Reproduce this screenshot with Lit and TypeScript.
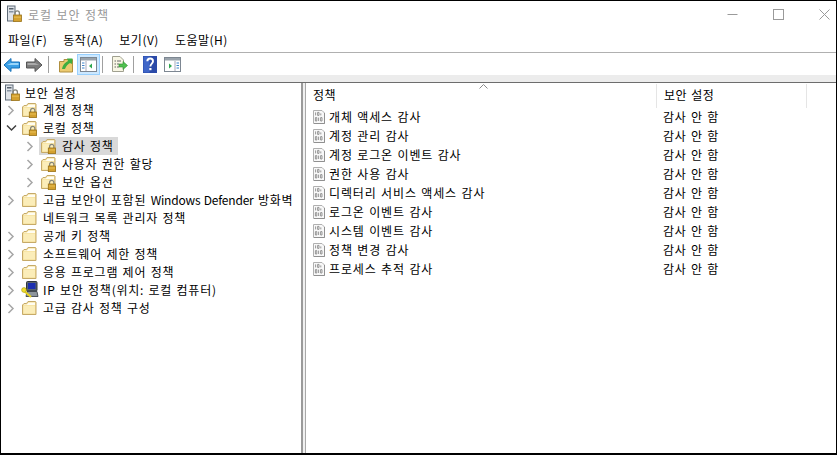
import { LitElement, html, css, svg } from "lit";
import { customElement } from "lit/decorators.js";

const lockParts = svg`<path d="M9.6 10V8.4A2.1 2.1 0 0 1 13.8 8.4V10" fill="none" stroke="#85857a" stroke-width="1.2"/>
  <rect x="8.3" y="10" width="7.2" height="5.6" fill="#d4a12f" stroke="#9a7218" stroke-width=".8"/><path d="M9 12H15" stroke="#eec860" stroke-width=".8"/>`;

const folder = (lock: boolean) => svg`<svg class="ic" width="18" height="16" viewBox="0 0 18 16">
  <path d="M1.5 5L3 3.5H5.5L7 1.5H14.5L15 2V14.5H1.5Z" fill="#f3dc95" stroke="#c6aa68"/>
  <path d="M7.5 2.5H14V5H3V4.5H6Z" fill="#fffdf2"/>
  <rect x="2.5" y="5.5" width="11.5" height="8" fill="#fbedb9"/>
  ${lock ? lockParts : ""}
</svg>`;

const server = svg`<svg class="ic" width="18" height="18" viewBox="0 0 18 18">
  <rect x="2.5" y="1" width="7.5" height="15" fill="#dfe3e8" stroke="#5f6b78"/>
  <rect x="4" y="3" width="4.5" height="1.5" fill="#55606c"/><rect x="4" y="6" width="4.5" height="1.5" fill="#8794a2"/>
  <path d="M10 9.5V8A2.2 2.2 0 0 1 14.4 8V10" fill="none" stroke="#85857a" stroke-width="1.3"/>
  <rect x="8.5" y="10" width="8" height="6.5" fill="#d4a12f" stroke="#9a7218" stroke-width=".8"/>
  <path d="M9 12.2H16" stroke="#eec860" stroke-width=".8"/>
</svg>`;

const ipsec = svg`<svg class="ic" width="18" height="18" viewBox="0 0 18 18">
  <rect x="5.5" y="0.5" width="10.5" height="9.5" rx="1" fill="#59646e" stroke="#30363d"/>
  <rect x="7" y="2" width="7.5" height="6" fill="#1c2fb0"/>
  <path d="M6 10.5H16L17 15.5H5Z" fill="#8d959c" stroke="#30363d" stroke-width=".8"/>
  <path d="M2 9L10 16" stroke="#e8d21e" stroke-width="2"/><circle cx="3" cy="9" r="2.4" fill="#f2e02a" stroke="#a69514" stroke-width=".6"/>
</svg>`;

const policy = svg`<svg class="ic" width="14" height="15" viewBox="0 0 14 15">
  <path d="M1.5 1.5H10L12.5 4V14.5H1.5Z" fill="#f8f8f8" stroke="#b0b0b0"/>
  <path d="M12.5 4V14.5H2" fill="none" stroke="#909090"/>
  <path d="M3.6 3.4v3M5.6 3.4h1.4v3H5.6zM8.8 4.4v2M3.4 8.6h1.4v3.4H3.4zM6.6 8.6v3.4M8.6 8.6h1.4v3.4H8.6z" fill="none" stroke="#8c8c8c" stroke-width=".9"/>
</svg>`;

const chevR = svg`<svg width="8" height="11" viewBox="0 0 8 11"><path d="M1.5 1L6 5.5L1.5 10" fill="none" stroke="#a6a6a6" stroke-width="1.5"/></svg>`;
const chevD = svg`<svg width="11" height="8" viewBox="0 0 11 8"><path d="M1 1.5L5.5 6L10 1.5" fill="none" stroke="#404040" stroke-width="1.5"/></svg>`;

const tree: [number, "r" | "d" | "", string, unknown, boolean?][] = [
  [0, "r", "lock", "계정 정책"],
  [0, "d", "lock", "로컬 정책"],
  [1, "r", "lock", "감사 정책", true],
  [1, "r", "lock", "사용자 권한 할당"],
  [1, "r", "lock", "보안 옵션"],
  [0, "r", "folder", html`고급 보안이 포함된 <span class="latin">Windows Defender</span> 방화벽`],
  [0, "", "folder", "네트워크 목록 관리자 정책"],
  [0, "r", "folder", "공개 키 정책"],
  [0, "r", "folder", "소프트웨어 제한 정책"],
  [0, "r", "folder", "응용 프로그램 제어 정책"],
  [0, "r", "ip", "IP 보안 정책(위치: 로컬 컴퓨터)"],
  [0, "r", "folder", "고급 감사 정책 구성"],
];
const rows = ["개체 액세스 감사", "계정 관리 감사", "계정 로그온 이벤트 감사", "권한 사용 감사", "디렉터리 서비스 액세스 감사", "로그온 이벤트 감사", "시스템 이벤트 감사", "정책 변경 감사", "프로세스 추적 감사"];

@customElement("app-root")
export class AppRoot extends LitElement {
  static styles = css`
    :host { display: block; width: 837px; height: 455px; box-sizing: border-box; border: 1px solid #000; border-bottom-width: 2px; background: #fff; overflow: hidden;
      font: 12px "Noto Sans CJK KR", "Liberation Sans", sans-serif; color: #000; }
    .win { display: flex; flex-direction: column; height: 100%; }
    .title { height: 26px; display: flex; align-items: center; padding-left: 4px; color: #999; letter-spacing: .9px; word-spacing: 1px; flex: none; }
    .title span { margin-left: 5px; }
    .caps { margin-left: auto; display: flex; align-items: center; }
    .cap { width: 46px; height: 26px; display: flex; align-items: center; justify-content: center; }
    .cap:last-child { width: 24px; margin-left: 11px; }
    .menu { height: 25px; display: flex; align-items: center; padding-left: 7px; gap: 16px; flex: none; border-bottom: 1px solid #b0b0b0; letter-spacing: .5px; }
    .tools { height: 22px; display: flex; align-items: flex-end; flex: none; box-sizing: border-box; }
    .tb { width: 23px; height: 21px; display: flex; align-items: center; justify-content: center; box-sizing: border-box; flex: none; }
    .tb.first { width: 21px; }
    .tb.on { background: #cce8ff; border: 1px solid #99d1ff; }
    .sep { width: 1px; height: 17px; background: #a0a0a0; flex: none; align-self: center; margin-top: 1px; }
    .s1 { margin: 1px 5px 0 3px; }
    .s2 { margin: 1px 4px 0 2px; }
    .s3 { margin: 1px 4px 0 3px; }
    .band { height: 7px; background: #ececec; border-bottom: 1px solid #6d6d6d; flex: none; box-sizing: content-box; }
    .panes { flex: 1; display: flex; min-height: 0; }
    .left { width: 300px; flex: none; padding-top: 1px; box-sizing: border-box; }
    .split { width: 5px; flex: none; box-sizing: border-box; background: #f0f0f0; border-left: 2px solid #9a9a9a; border-right: 1px solid #a8a8a8; }
    .right { flex: 1; display: flex; flex-direction: column; min-width: 0; }
    .node { height: 18px; display: flex; align-items: center; white-space: nowrap; }
    .arrow { width: 14px; display: flex; justify-content: center; align-items: center; flex: none; margin-left: 3px; }
    .lv1 { padding-left: 19px; }
    .node .ic { flex: none; margin-left: 3px; margin-right: 3px; }
    .node.root { padding-left: 2px; height: 17px; }
    .node.root .ic { margin: 0 3px 0 0; }
    .lbl { padding: 0 4px 0 1px; height: 18px; line-height: 18px; word-spacing: 1px; letter-spacing: .75px; }
    .latin { letter-spacing: -.2px; }
    .sel { background: #d9d9d9; display: flex; align-items: center; height: 18px; margin-left: 2px; }
    .node .sel .ic { margin-left: 1px; }
    .head { height: 24px; display: flex; position: relative; flex: none; }
    .hc { padding: 2px 7px 0; height: 24px; box-sizing: border-box; border-right: 1px solid #e5e5e5; letter-spacing: .5px; word-spacing: 1px; margin-top: 1px; }
    .hc.a { width: 351px; }
    .hc.b { width: 150px; }
    .sort { position: absolute; left: 173px; top: 1px; }
    .item { height: 19px; display: flex; align-items: center; white-space: nowrap; letter-spacing: .85px; word-spacing: 1px; }
    .name { width: 350px; display: flex; align-items: center; box-sizing: border-box; padding-left: 6px; flex: none; }
    .name .ic { margin-right: 3px; }
    .val { padding-left: 7px; letter-spacing: .75px; }
    .list { padding-top: 0; }
  `;
  render() {
    return html`<div class="win">
      <div class="title">
        ${server}<span>로컬 보안 정책</span>
        <div class="caps">
          <div class="cap"><svg width="11" height="11" viewBox="0 0 11 11"><path d="M.5 5.5H10.5" stroke="#9a9a9a"/></svg></div>
          <div class="cap"><svg width="11" height="11" viewBox="0 0 11 11"><rect x=".5" y=".5" width="10" height="10" fill="none" stroke="#9a9a9a"/></svg></div>
          <div class="cap"><svg width="11" height="11" viewBox="0 0 11 11"><path d="M.5 .5L10.5 10.5M10.5 .5L.5 10.5" stroke="#9a9a9a"/></svg></div>
        </div>
      </div>
      <div class="menu"><span>파일(F)</span><span>동작(A)</span><span>보기(V)</span><span>도움말(H)</span></div>
      <div class="tools">
        <div class="tb first"><svg width="18" height="16" viewBox="0 0 18 16"><path d="M1 8L8 1.5V5H16.5V11H8V14.5Z" fill="#3a9fe6" stroke="#1570b8"/><path d="M8 6H15.5V8H4Z" fill="#9ad6fa"/></svg></div>
        <div class="tb"><svg width="18" height="16" viewBox="0 0 18 16"><path d="M17 8L10 1.5V5H1.5V11H10V14.5Z" fill="#7c7c7c" stroke="#555"/><path d="M10 6H2.5V8H14Z" fill="#aaa"/></svg></div>
        <div class="sep s1"></div>
        <div class="tb"><svg width="16" height="17" viewBox="0 0 16 17"><path d="M1.5 5.5H6V3.5H14.5V16H1.5Z" fill="#ecca70" stroke="#b08f3e"/><path d="M4 13C5 8 8 6 10 5L9 2.5L14.5 2.5L14 8L12 7C10 8 8 10 7 13Z" fill="#3fae3f"/></svg></div>
        <div class="tb on"><svg width="17" height="15" viewBox="0 0 17 15"><rect x=".5" y=".5" width="16" height="14" fill="#fff" stroke="#7d8792"/><rect x="1" y="1" width="15" height="2.5" fill="#9aa3ac"/><path d="M6 4V14" stroke="#aab"/><path d="M2 6h2.5M2 8.5h2.5M2 11h2.5" stroke="#3c82c8"/><path d="M12 6.5V11.5L9 9Z" fill="#2fa84f"/></svg></div>
        <div class="sep s2"></div>
        <div class="tb"><svg width="18" height="17" viewBox="0 0 18 17"><path d="M2.5 .5H10L13.5 4V15.5H2.5Z" fill="#f8f6e4" stroke="#a0a090"/><path d="M4.5 5h1.5M7 5h4M4.5 8h1.5M7 8h2M4.5 11h1.5M7 11h2" stroke="#666"/><path d="M9 8H13V5.5L17.5 9.5L13 13.5V11H9Z" fill="#4fc04f" stroke="#2f8f2f" stroke-width=".6"/></svg></div>
        <div class="sep s3"></div>
        <div class="tb"><svg width="14" height="17" viewBox="0 0 14 17"><rect width="14" height="17" fill="#2b4aa8"/><rect x=".5" y=".5" width="6" height="16" fill="#3f66c8"/><path d="M4.3 5.2C4.5 1.6 10 1.6 10 5.2C10 7.6 7.4 7.6 7.4 10.4" fill="none" stroke="#fff" stroke-width="1.9"/><rect x="6.3" y="12" width="2.2" height="2.2" fill="#fff"/></svg></div>
        <div class="tb"><svg width="17" height="15" viewBox="0 0 17 15"><rect x=".5" y=".5" width="16" height="14" fill="#fff" stroke="#7d8792"/><rect x="1" y="1" width="15" height="2.5" fill="#9aa3ac"/><path d="M11 4V14" stroke="#aab"/><path d="M12.5 6h2.5M12.5 8.5h2.5M12.5 11h2.5" stroke="#3c82c8"/><path d="M5 6.5V11.5L8 9Z" fill="#2fa84f"/></svg></div>
      </div>
      <div class="band"></div>
      <div class="panes">
        <div class="left">
          <div class="node root">${server}<span class="lbl">보안 설정</span></div>
          ${tree.map(([lv, a, ic, t, sel]) => {
            const icon = ic === "ip" ? ipsec : folder(ic === "lock");
            return html`<div class="node ${lv ? "lv1" : ""}">
              <div class="arrow">${a === "r" ? chevR : a === "d" ? chevD : ""}</div>
              ${sel ? html`<div class="sel">${icon}<span class="lbl">${t}</span></div>` : html`${icon}<span class="lbl">${t}</span>`}
            </div>`;
          })}
        </div>
        <div class="split"></div>
        <div class="right">
          <div class="head">
            <div class="hc a">정책</div><div class="hc b">보안 설정</div>
            <svg class="sort" width="9" height="5" viewBox="0 0 9 5"><path d="M.5 4.5L4.5 .5L8.5 4.5" fill="none" stroke="#8a8a8a"/></svg>
          </div>
          <div class="list">
            ${rows.map((r) => html`<div class="item"><div class="name">${policy}<span>${r}</span></div><div class="val">감사 안 함</div></div>`)}
          </div>
        </div>
      </div>
    </div>`;
  }
}
